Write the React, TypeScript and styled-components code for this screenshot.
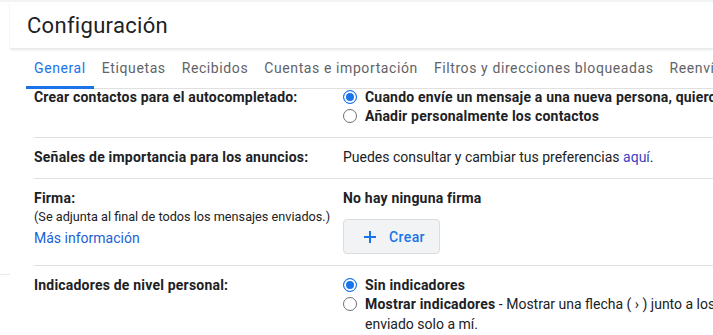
import React from 'react';
import styled, { createGlobalStyle } from 'styled-components';

const GlobalStyle = createGlobalStyle`
  html, body {
    margin: 0;
    padding: 0;
    background: #fff;
    overflow: hidden;
  }
  body {
    font-family: Roboto, 'Liberation Sans', Arial, sans-serif;
    color: #202124;
    -webkit-font-smoothing: antialiased;
  }
`;

const Page = styled.div`
  width: 713px;
  height: 335px;
  overflow: hidden;
  display: flex;
  flex-direction: column;
  border-top: 2px solid #f1f3f4;
  box-sizing: border-box;
`;

const Body = styled.div`
  flex: 1;
  display: flex;
  min-height: 0;
`;

// left gutter, only its bottom edge shows
const Gutter = styled.div`
  flex: none;
  width: 10px;
  & > div {
    height: 272px;
    border-bottom: 1px solid #e8eaed;
  }
`;

const Panel = styled.div`
  flex: 1;
  min-width: 0;
  display: flex;
  flex-direction: column;
`;

const Header = styled.header`
  padding: 10px 0 8px 17px;
  border-bottom: 1px solid #e8eaed;
  box-shadow: 0 1px 2px rgba(60, 64, 67, 0.12);
  position: relative;
  z-index: 1;
`;

const Title = styled.h1`
  margin: 0;
  font-size: 22px;
  line-height: 28px;
  font-weight: 400;
  letter-spacing: 0.3px;
  color: #202124;
  white-space: nowrap;
`;

const TabBar = styled.nav`
  display: flex;
  margin-left: 16px;
  height: 40px;
  box-sizing: border-box;
  border-bottom: 1px solid #e0e0e0;
  white-space: nowrap;
`;

const Tab = styled.a<{ $active?: boolean }>`
  flex: none;
  height: 40px;
  box-sizing: border-box;
  margin-bottom: -1px;
  padding: 9px 8px 0;
  line-height: 20px;
  font-size: 14px;
  letter-spacing: 0.6px;
  color: ${(p) => (p.$active ? '#1a73e8' : '#5f6368')};
  border-bottom: 3px solid ${(p) => (p.$active ? '#1a73e8' : 'transparent')};
  cursor: pointer;
`;

const Scroller = styled.div`
  flex: 1;
  min-height: 0;
  overflow: hidden;
  margin-left: 24px;
`;

// list is scrolled a little, so the first row's top padding is hidden
const List = styled.div`
  margin-top: -11px;
`;

const Row = styled.section`
  display: grid;
  grid-template-columns: 297px 1fr;
  column-gap: 12px;
  padding: 9px 0 11px;
  & + & {
    border-top: 1px solid #e0e0e0;
  }
  &:first-child {
    padding-bottom: 12px;
  }
`;

const Label = styled.div`
  font-size: 14px;
  line-height: 20px;
  font-weight: 700;
  letter-spacing: 0.2px;
  white-space: nowrap;
`;

const Note = styled.div`
  font-size: 12.7px;
  font-weight: 400;
  letter-spacing: 0;
  line-height: 18px;
`;

const Link = styled.a<{ $visited?: boolean }>`
  color: ${(p) => (p.$visited ? '#3c3fc4' : '#1a5fd6')};
  text-decoration: none;
  cursor: pointer;
`;

const MoreLink = styled(Link)`
  display: block;
  font-size: 14px;
  font-weight: 400;
  letter-spacing: 0;
  line-height: 20px;
  margin-top: 2px;
`;

const Value = styled.div`
  font-size: 14px;
  line-height: 20px;
  min-width: 0;
  white-space: nowrap;
`;

const Option = styled.label`
  display: flex;
  align-items: flex-start;
  font-size: 14px;
  line-height: 20px;
  margin-bottom: -1px;
`;

const Radio = styled.span<{ $checked?: boolean }>`
  flex: none;
  width: 14px;
  height: 14px;
  margin: 3px 8px 0 0;
  border-radius: 50%;
  box-sizing: border-box;
  border: ${(p) => (p.$checked ? '1.5px solid #1a73e8' : '1px solid #6d7175')};
  background: ${(p) => (p.$checked ? '#1a73e8' : '#fff')};
  box-shadow: inset 0 0 0 2px #fff;
`;

const Strong = styled.b`
  font-weight: 700;
  letter-spacing: 0.2px;
`;

const SignatureTitle = styled.div`
  font-weight: 700;
  font-size: 14px;
  line-height: 20px;
  letter-spacing: 0.2px;
`;

const CreateButton = styled.button`
  display: flex;
  align-items: center;
  gap: 12px;
  width: 97px;
  height: 35px;
  margin-top: 11px;
  padding: 0 0 0 19px;
  box-sizing: border-box;
  border: 1px solid #dadce0;
  border-radius: 4px;
  background: #f1f3f4;
  color: #1a73e8;
  font: 500 14px/20px Roboto, 'Liberation Sans', Arial, sans-serif;
  letter-spacing: 0.4px;
  cursor: pointer;
`;

const PlusIcon = () => (
  <svg width="14" height="14" viewBox="0 0 14 14" aria-hidden="true">
    <path d="M7 1v12M1 7h12" stroke="#1a73e8" strokeWidth="2" fill="none" />
  </svg>
);

const tabs = [
  'General',
  'Etiquetas',
  'Recibidos',
  'Cuentas e importación',
  'Filtros y direcciones bloqueadas',
  'Reenvío y correo POP/IMAP',
];

export default function App() {
  return (
    <>
      <GlobalStyle />
      <Page>
        <Body>
          <Gutter>
            <div />
          </Gutter>
          <Panel>
            <Header>
              <Title>Configuración</Title>
            </Header>
            <TabBar>
              {tabs.map((t, i) => (
                <Tab key={t} $active={i === 0}>
                  {t}
                </Tab>
              ))}
            </TabBar>
            <Scroller>
              <List>
                <Row>
                  <Label>Crear contactos para el autocompletado:</Label>
                  <Value>
                    <Option>
                      <Radio $checked />
                      <Strong>
                        Cuando envíe un mensaje a una nueva persona, quiero que se añada a Otros contactos
                      </Strong>
                    </Option>
                    <Option>
                      <Radio />
                      <Strong>Añadir personalmente los contactos</Strong>
                    </Option>
                  </Value>
                </Row>
                <Row>
                  <Label>Señales de importancia para los anuncios:</Label>
                  <Value>
                    Puedes consultar y cambiar tus preferencias <Link $visited>aquí</Link>.
                  </Value>
                </Row>
                <Row>
                  <Label>
                    Firma:
                    <Note>(Se adjunta al final de todos los mensajes enviados.)</Note>
                    <MoreLink>Más información</MoreLink>
                  </Label>
                  <Value>
                    <SignatureTitle>No hay ninguna firma</SignatureTitle>
                    <CreateButton>
                      <PlusIcon />
                      Crear
                    </CreateButton>
                  </Value>
                </Row>
                <Row>
                  <Label>Indicadores de nivel personal:</Label>
                  <Value>
                    <Option>
                      <Radio $checked />
                      <Strong>Sin indicadores</Strong>
                    </Option>
                    <Option>
                      <Radio />
                      <span>
                        <Strong>Mostrar indicadores</Strong> - Mostrar una flecha ( › ) junto a los mensajes
                        enviados a mi dirección, y una flecha doble ( » ) junto a los que me hayan
                        <br />
                        enviado solo a mí.
                      </span>
                    </Option>
                  </Value>
                </Row>
              </List>
            </Scroller>
          </Panel>
        </Body>
      </Page>
    </>
  );
}
